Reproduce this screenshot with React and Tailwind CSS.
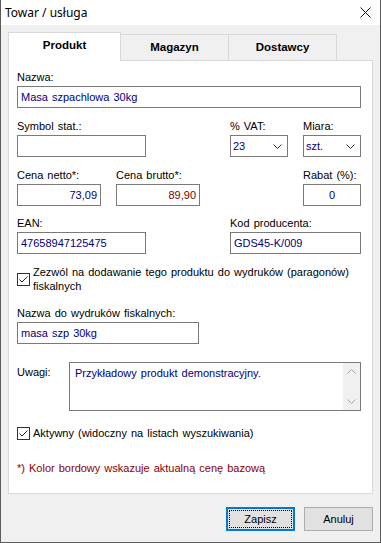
import React from "react";

// Windows-style form dialog: "Towar / usługa"
const VAL = "text-[#000080]";

function Label({ children, className = "" }) {
  return <div className={`h-[14px] leading-[14px] ${className}`}>{children}</div>;
}

function TextBox({ value, w, right, color = VAL }) {
  return (
    <div
      className={`h-[22px] border border-[#7a7a7a] bg-white flex items-center px-[3px] leading-none ${color} ${right ? "justify-end" : ""} ${w}`}
    >
      {value}
    </div>
  );
}

function Field({ label, value, w, right, color, className = "" }) {
  return (
    <div className={`flex flex-col gap-[2px] ${className}`}>
      <Label>{label}</Label>
      <TextBox value={value} w={w} right={right} color={color} />
    </div>
  );
}

function Chevron({ up, color = "#333", className = "" }) {
  return (
    <svg width="9" height="5" viewBox="0 0 9 5" className={className}>
      <path
        d={up ? "M0.5 4.5 L4.5 0.5 L8.5 4.5" : "M0.5 0.5 L4.5 4.5 L8.5 0.5"}
        fill="none"
        stroke={color}
        strokeWidth="1"
      />
    </svg>
  );
}

function Select({ label, value, className = "" }) {
  return (
    <div className={`flex flex-col gap-[2px] ${className}`}>
      <Label>{label}</Label>
      <div className="h-[22px] w-[58px] border border-[#7a7a7a] bg-white flex items-center justify-between pl-[2px] pr-[5px]">
        <span className={VAL}>{value}</span>
        <Chevron />
      </div>
    </div>
  );
}

function CheckBox() {
  return (
    <div className="w-[13px] h-[13px] border border-[#333] bg-white flex items-center justify-center shrink-0">
      <svg width="11" height="11" viewBox="0 0 11 11">
        <path d="M1.5 5.5 L4 8 L9.5 2.5" fill="none" stroke="#222" strokeWidth="1" />
      </svg>
    </div>
  );
}

export default function App() {
  return (
    <div className="w-[381px] h-[543px] bg-[#f0f0f0] border-x border-b border-[#5c5c5c] flex flex-col font-['Liberation_Sans',Arial,sans-serif] text-[11px] [word-spacing:1px] text-black">
      {/* title bar */}
      <div className="h-[25px] bg-white flex items-center justify-between pl-[4px] pr-[9px] shrink-0">
        <span className="font-['Noto_Sans',sans-serif] text-[12px] [word-spacing:0px]">Towar / usługa</span>
        <svg width="11" height="11" viewBox="0 0 11 11">
          <path d="M0.5 0.5 L10.5 10.5 M10.5 0.5 L0.5 10.5" stroke="#111" strokeWidth="1" />
        </svg>
      </div>

      {/* tabs */}
      <div className="flex items-end h-[28px] mt-[7px] ml-[7px] text-[11.5px]">
        <div className="relative z-10 h-[29px] -mb-[1px] w-[113px] bg-white border-x border-t border-[#d9d9d9] flex items-center justify-center font-bold pb-[2px]">
          Produkt
        </div>
        <div className="h-[26px] w-[108px] border-t border-r border-[#d9d9d9] flex items-center justify-center font-bold">
          Magazyn
        </div>
        <div className="h-[26px] w-[108px] border-t border-r border-[#d9d9d9] flex items-center justify-center font-bold">
          Dostawcy
        </div>
      </div>

      {/* panel */}
      <div className="ml-[7px] w-[365px] h-[434px] bg-white border border-[#d9d9d9] pl-[8px] pt-[9px] flex flex-col shrink-0">
        <Field label="Nazwa:" value="Masa szpachlowa 30kg" w="w-[344px]" />

        <div className="flex mt-[11px]">
          <Field label="Symbol stat.:" value="" w="w-[129px]" />
          <Select label="% VAT:" value="23" className="ml-[84px]" />
          <Select label="Miara:" value="szt." className="ml-[15px]" />
        </div>

        <div className="flex mt-[11px]">
          <Field label="Cena netto*:" value="73,09" w="w-[84px]" right />
          <Field label="Cena brutto*:" value="89,90" w="w-[84px]" right color="text-[#800000]" className="ml-[15px]" />
          <Field label="Rabat (%):" value="0" w="w-[58px] !justify-center" className="ml-[103px]" />
        </div>

        <div className="flex mt-[10px]">
          <Field label="EAN:" value="47658947125475" w="w-[129px]" />
          <Field label="Kod producenta:" value="GDS45-K/009" w="w-[131px]" className="ml-[84px]" />
        </div>

        <div className="flex items-center gap-[3px] mt-[11px]">
          <CheckBox />
          <div className="leading-[14px]">
            Zezwól na dodawanie tego produktu do wydruków (paragonów)
            <br />
            fiskalnych
          </div>
        </div>

        <Field label="Nazwa do wydruków fiskalnych:" value="masa szp 30kg" w="w-[182px]" className="mt-[13px]" />

        <div className="flex mt-[18px]">
          <div className="w-[52px] pt-[3px] leading-[14px]">Uwagi:</div>
          <div className="w-[292px] h-[49px] border border-[#7a7a7a] bg-white flex">
            <div className={`flex-1 pl-[5px] pt-[3px] leading-[14px] ${VAL}`}>
              Przykładowy produkt demonstracyjny.
            </div>
            <div className="w-[17px] bg-[#f0f0f0] flex flex-col items-center justify-between py-[6px]">
              <Chevron up color="#a3a3a3" />
              <Chevron color="#a3a3a3" />
            </div>
          </div>
        </div>

        <div className="flex items-center gap-[3px] mt-[15px] leading-[14px]">
          <CheckBox />
          <span>Aktywny (widoczny na listach wyszukiwania)</span>
        </div>

        <div className="mt-[21px] leading-[14px] text-[#8b0000]">
          *) Kolor bordowy wskazuje aktualną cenę bazową
        </div>
      </div>

      {/* buttons */}
      <div className="flex justify-end gap-[9px] mt-[13px] pr-[7px]">
        <div className="w-[69px] h-[24px] bg-[#e1e1e1] border-2 border-[#0078d7] p-[1px]">
          <div className="w-full h-full border border-dotted border-black flex items-center justify-center">
            Zapisz
          </div>
        </div>
        <div className="w-[69px] h-[24px] bg-[#e1e1e1] border border-[#adadad] flex items-center justify-center">
          Anuluj
        </div>
      </div>
    </div>
  );
}
